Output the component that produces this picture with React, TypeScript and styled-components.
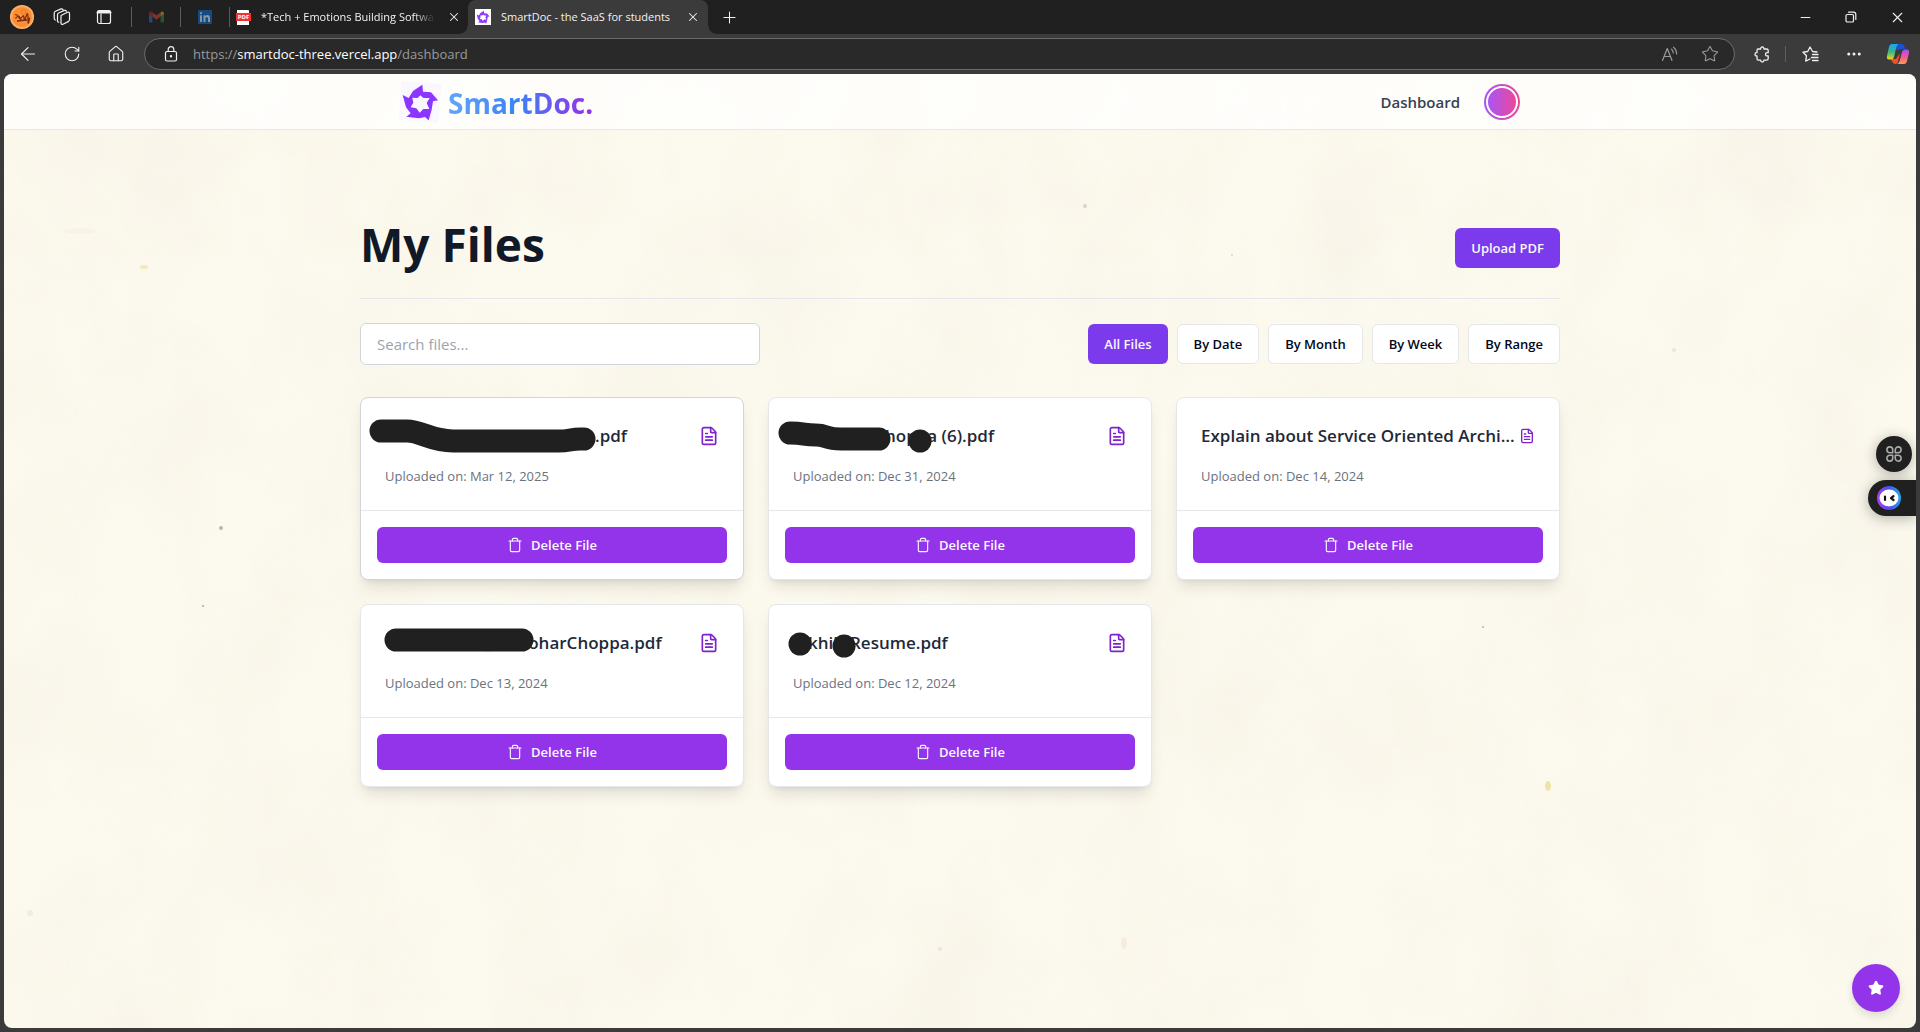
import React from 'react';
import styled, { createGlobalStyle, css } from 'styled-components';
import {
  ArrowLeft, RotateCw, House, X, Plus, Minus, Star, FileText, Trash, Ellipsis,
} from 'lucide-react';

const sans = '"Open Sans", "Noto Sans", sans-serif';

const GlobalStyle = createGlobalStyle`
  *, *::before, *::after { box-sizing: border-box; }
  body { margin: 0; background: #3b3b3b; font-family: ${sans}; }
  button, input { font-family: inherit; }
  h1, h2, p { margin: 0; }
`;

const Window = styled.div`
  min-height: 100vh;
  display: flex;
  flex-direction: column;
  background: #3b3b3b;
`;

/* ---------- browser chrome ---------- */

const TabStrip = styled.div`
  height: 34px;
  display: flex;
  align-items: center;
  background: #202020;
  color: #f2f2f2;
`;

const IconButton = styled.button<{ $w?: number; $dim?: boolean }>`
  width: ${(p) => p.$w ?? 44}px;
  height: 28px;
  flex: none;
  padding: 0;
  border: 0;
  background: none;
  color: ${(p) => (p.$dim ? '#9a9a9a' : '#f0f0f0')};
  display: flex;
  align-items: center;
  justify-content: center;
`;

const Profile = styled(IconButton)`
  margin: 0 7px 0 10px;
`;

const PinnedTab = styled.button`
  width: 49px;
  height: 20px;
  padding: 0;
  border: 0;
  border-left: 1px solid #5c5c5c;
  background: none;
  display: flex;
  align-items: center;
  justify-content: center;
`;

const Pinned = styled.div`
  display: flex;
  margin-left: 6px;
`;

const Tab = styled.div<{ $active?: boolean }>`
  position: relative;
  display: flex;
  align-items: center;
  gap: 8px;
  font-size: 11px;
  line-height: 16px;
  white-space: nowrap;
  ${(p) =>
    p.$active
      ? css`
          width: 240px;
          height: 34px;
          padding: 0 4px 0 7px;
          background: #3b3b3b;
          border-radius: 8px 8px 0 0;
          &::before, &::after {
            content: '';
            position: absolute;
            bottom: 0;
            width: 8px;
            height: 8px;
          }
          &::before {
            left: -8px;
            background: radial-gradient(circle at 0 0, #202020 7px, #3b3b3b 8px);
          }
          &::after {
            right: -8px;
            background: radial-gradient(circle at 100% 0, #202020 7px, #3b3b3b 8px);
          }
        `
      : css`
          width: 239px;
          height: 20px;
          padding: 0 3px 0 6px;
          border-left: 1px solid #5c5c5c;
        `}
`;

const TabTitle = styled.span<{ $fade?: boolean }>`
  flex: 1;
  min-width: 0;
  padding-left: 2px;
  ${(p) => p.$fade && 'mask-image: linear-gradient(to right, #000 88%, transparent);'}
`;

const WindowControls = styled.div`
  margin-left: auto;
  display: flex;
`;

const Toolbar = styled.div`
  height: 40px;
  padding-left: 6px;
  display: flex;
  align-items: center;
`;

const AddressBar = styled.div`
  flex: 1;
  height: 32px;
  margin: 0 5px 0 6px;
  padding: 0 4px;
  display: flex;
  align-items: center;
  background: #292929;
  border: 1px solid #6c6c6c;
  border-radius: 16px;
`;

const Address = styled.span`
  flex: 1;
  font-size: 13px;
  line-height: 20px;
  color: #9a9a9a;
  b { font-weight: 400; color: #fff; }
`;

const Divider = styled.span`
  width: 1px;
  height: 16px;
  margin: 0 2px 0 1px;
  background: #5e5e5e;
`;

/* ---------- site ---------- */

const Site = styled.div`
  flex: 1;
  position: relative;
  margin: 0 4px 4px;
  border-radius: 8px;
  overflow: hidden;
  background: #fcf9ee;
`;

const Paper = styled.svg`
  position: absolute;
  inset: 0;
  width: 100%;
  height: 100%;
  pointer-events: none;
`;

const Nav = styled.nav`
  position: relative;
  height: 56px;
  background: rgba(255, 255, 255, .75);
  border-bottom: 1px solid #e5e7eb;
`;

const NavInner = styled.div`
  height: 100%;
  max-width: 1200px;
  margin: 0 auto;
  padding: 0 40px 0 38px;
  display: flex;
  align-items: center;
  justify-content: space-between;
`;

const Brand = styled.a`
  display: flex;
  align-items: center;
  gap: 6px;
  text-decoration: none;
`;

const BrandName = styled.span`
  padding-top: 2px;
  font-size: 28px;
  line-height: 36px;
  font-weight: 700;
  color: transparent;
  background: linear-gradient(to right, #60a5fa, #3b82f6 48%, #9333ea 95%);
  background-clip: text;
`;

const NavLinks = styled.div`
  display: flex;
  align-items: center;
  gap: 24px;
`;

const NavLink = styled.a`
  font-size: 15px;
  line-height: 24px;
  font-weight: 600;
  color: #374151;
  text-decoration: none;
`;

const Avatar = styled.button`
  width: 36px;
  height: 36px;
  padding: 2px;
  border: 0;
  border-radius: 50%;
  background: linear-gradient(to right, #a855f7, #ec4899);

  &::before {
    content: '';
    display: block;
    width: 32px;
    height: 32px;
    border: 2px solid #fff;
    border-radius: 50%;
    background: linear-gradient(to right, #a855f7, #ec4899) padding-box;
  }
`;

const Main = styled.main`
  position: relative;
  max-width: 1200px;
  margin: 0 auto;
  padding-top: 90px;
`;

const PageHeader = styled.header`
  display: flex;
  align-items: flex-end;
  justify-content: space-between;
  padding-bottom: 30px;
  border-bottom: 1px solid #e5e7eb;
`;

const Heading = styled.h1`
  font-size: 46px;
  line-height: 48px;
  font-weight: 700;
  color: #111827;
`;

const Button = styled.button<{ $variant: 'primary' | 'outline' | 'danger' }>`
  height: ${(p) => (p.$variant === 'danger' ? 36 : 40)}px;
  width: ${(p) => (p.$variant === 'danger' ? '100%' : 'auto')};
  padding: 0 16px;
  display: flex;
  align-items: center;
  justify-content: center;
  gap: 8px;
  font-size: 13px;
  line-height: 20px;
  font-weight: 600;
  white-space: nowrap;
  border-radius: 6px;
  border: ${(p) => (p.$variant === 'outline' ? '1px solid #e5e7eb' : '0')};
  color: ${(p) => (p.$variant === 'outline' ? '#020817' : '#f8fafc')};
  background: ${(p) => ({ primary: '#7c3aed', outline: '#fff', danger: '#9333ea' })[p.$variant]};
`;

const Controls = styled.div`
  margin: 24px 0 32px;
  display: flex;
  align-items: center;
  justify-content: space-between;
`;

const Search = styled.input`
  width: 400px;
  height: 42px;
  padding: 0 16px;
  font-size: 15px;
  color: #111827;
  background: #fff;
  border: 1px solid #d1d5db;
  border-radius: 6px;
  &::placeholder { color: #9ca3af; opacity: 1; }
`;

const Filters = styled.div`
  display: flex;
  gap: 9px;
`;

const Grid = styled.ul`
  margin: 0;
  padding: 0;
  list-style: none;
  display: grid;
  grid-template-columns: repeat(3, 1fr);
  gap: 24px;
`;

const Card = styled.li<{ $hover?: boolean }>`
  position: relative;
  background: #fff;
  border: 1px solid ${(p) => (p.$hover ? '#d1d5db' : '#e5e7eb')};
  border-radius: 8px;
  box-shadow: 0 10px 15px -3px rgba(0, 0, 0, .1), 0 4px 6px -4px rgba(0, 0, 0, .1);
`;

const CardBody = styled.div`
  padding: 24px;
`;

const TitleRow = styled.div`
  display: flex;
  align-items: center;
  justify-content: space-between;
  color: #7e22ce;
`;

const FileName = styled.h2`
  font-size: 17px;
  line-height: 28px;
  font-weight: 600;
  white-space: pre;
  color: #1f2937;
`;

const Blank = styled.span<{ $w: number }>`
  display: inline-block;
  width: ${(p) => p.$w}px;
`;

const Marker = styled.svg`
  position: absolute;
  left: 0;
  top: 0;
  width: 100%;
  height: 100%;
  pointer-events: none;
  fill: none;
  stroke: #202020;
  stroke-width: 23px;
  stroke-linecap: round;
  stroke-linejoin: round;
`;

const Uploaded = styled.p`
  margin-top: 16px;
  font-size: 13px;
  line-height: 20px;
  color: #6b7280;
`;

const CardFooter = styled.div`
  padding: 16px;
  border-top: 1px solid #e5e7eb;
`;

const SideDock = styled.div`
  position: absolute;
  right: 0;
  top: 362px;
  display: flex;
  flex-direction: column;
  align-items: flex-end;
  gap: 8px;
`;

const DockButton = styled.button<{ $pill?: boolean }>`
  width: ${(p) => (p.$pill ? 48 : 36)}px;
  height: 36px;
  margin-right: ${(p) => (p.$pill ? 0 : 4)}px;
  padding: ${(p) => (p.$pill ? '0 0 0 9px' : '0')};
  display: flex;
  align-items: center;
  justify-content: ${(p) => (p.$pill ? 'flex-start' : 'center')};
  border: 0;
  border-radius: ${(p) => (p.$pill ? '18px 0 0 18px' : '18px')};
  background: #202020;
  box-shadow: 0 2px 14px rgba(0, 0, 0, .3);
`;

const Fab = styled.button`
  position: absolute;
  right: 16px;
  bottom: 16px;
  width: 48px;
  height: 48px;
  padding: 0;
  display: flex;
  align-items: center;
  justify-content: center;
  border: 0;
  border-radius: 50%;
  color: #fff;
  background: #9333ea;
  box-shadow: 0 4px 8px rgba(0, 0, 0, .12);
`;

/* ---------- drawings ---------- */

const LogoShape = () => (
  <path
    fill="#8b35ff"
    fillRule="evenodd"
    d="M217 44 219 65 243 67 264 91 249 94 245 119 236 151 225 141 207 145 169 140 182 130 168 112 158 75 176 84 189 63ZM211 76 203 84 187 83 190 98 182 112 199 115 209 128 220 117 238 117 230 99 239 84 220 84Z"
  />
);

const Logo = () => (
  <svg width="44" height="44" viewBox="144 30 132 132" aria-hidden="true">
    <path fill="#faf7ff" d="M154 33 275 42 265 159 147 150Z" />
    <LogoShape />
  </svg>
);

const stroke = {
  fill: 'none', stroke: 'currentColor', strokeWidth: 1.2,
  strokeLinecap: 'round' as const, strokeLinejoin: 'round' as const,
};

const WorkspacesIcon = () => (
  <svg width="18" height="18" viewBox="0 0 18 18" {...stroke}>
    <path d="M8 7.5 14.5 4.2Q16.5 3.6 16.5 5.5V11.5Q16.5 13 15.2 13.6L10 16.2Q8 16.8 8 15ZM8 7.5V15" />
    <path d="M5.8 14.2Q4.5 14.4 4.5 12.8V6.8Q4.5 5.4 6 4.8L11.5 2.4Q13 2 13.4 3.2M2.6 12Q1.2 12 1.2 10.5V5Q1.2 3.8 2.5 3.2L8 .9Q9.4.6 10 1.6" />
  </svg>
);

const TabActionsIcon = () => (
  <svg width="16" height="16" viewBox="0 0 16 16" {...stroke}>
    <rect x="1.5" y="1.5" width="13" height="13" rx="2" />
    <path d="M1.5 3.5h13M2 2.5h12" strokeWidth="2" />
    <path d="M5 5v9" />
  </svg>
);

const LockIcon = () => (
  <svg width="16" height="16" viewBox="0 0 16 16" {...stroke}>
    <rect x="2.5" y="5.5" width="11" height="9.5" rx="1.5" />
    <path d="M5.2 5.5V3.500A2.800 2.800 0 0 1 10.800 3.500V5.500" />
    <circle cx="8" cy="10.2" r=".6" fill="currentColor" />
  </svg>
);

const GmailIcon = () => (
  <svg width="15" height="12" viewBox="0 0 15 12">
    <path fill="#24487a" d="M0 2h3.4v9.5H1Q0 11.5 0 10.5Z" />
    <path fill="#235636" d="M11.6 2H15v8.500q0 1-1 1h-2.400Z" />
    <path fill="#86302a" d="M3.4 1.2 7.5 4.4l4.1-3.2v4.3L7.5 8.7 3.4 5.5Z" />
    <path fill="#6c2620" d="M0 2.6Q0 .5 1.8.5q.8 0 1.6.7v4.3L0 3Z" />
    <path fill="#80681f" d="M15 2.6Q15 .5 13.2.5q-.8 0-1.6.7v4.3L15 3Z" />
  </svg>
);

const LinkedInIcon = () => (
  <svg width="14" height="14" viewBox="0 0 14 14">
    <rect width="14" height="14" rx="1" fill="#174a7c" />
    <path fill="#8296ab" d="M2 5.3h2V12H2ZM3 2.1a1.1 1.1 0 1 1 0 2.2 1.1 1.1 0 0 1 0-2.2M5.5 5.3h2v.9Q8.200 5.100 9.600 5.100 12 5.100 12 8v4h-2V8.500Q10 6.900 8.900 6.900 7.500 6.900 7.500 8.600V12h-2Z" />
  </svg>
);

const PdfMark = styled.span`
  width: 15px;
  height: 15px;
  flex: none;
  display: flex;
  align-items: center;
  justify-content: center;
  background: linear-gradient(#fff, #fff) 1px 0 / 12px 15px no-repeat;
  border-radius: 1px 4px 1px 1px;
  span {
    width: 15px;
    flex: none;
    background: #f0342c;
    color: #fff;
    font-size: 6px;
    line-height: 8px;
    font-weight: 700;
    text-align: center;
  }
`;

const ProfilePicture = () => (
  <svg width="24" height="24" viewBox="0 0 24 24">
    <defs>
      <radialGradient id="sun"><stop offset="0" stopColor="#ff9a3c" /><stop offset=".75" stopColor="#fb8a34" /><stop offset="1" stopColor="#ffc27a" /></radialGradient>
    </defs>
    <circle cx="12" cy="12" r="12" fill="url(#sun)" />
    <circle cx="13.5" cy="7" r="2.2" fill="none" stroke="#d8761c" strokeWidth=".8" />
    <path d="M5 9.500 8.500 10.500M5.500 13.500Q8 10 9 12.500T12 12 14 13.500 16 11.500 18 14 19.500 12.500M7 16 17 15M9 11 11 15" fill="none" stroke="#7c2c0c" strokeWidth="1.3" />
  </svg>
);

const RestoreIcon = () => (
  <svg width="12" height="12" viewBox="0 0 12 12" {...stroke}>
    <rect x="1" y="3.5" width="7.5" height="7.5" rx="1.3" />
    <path d="M3.500 1.200H8.500Q10.800 1.200 10.800 3.500V8.500" />
  </svg>
);

const ReadAloudIcon = () => (
  <svg width="18" height="16" viewBox="0 0 18 16" {...stroke}>
    <path d="M1.500 14.500 6.300 2.500 11 14.500M3.200 10.500H9.400M10.500 3.200Q12.200 4.400 12.200 7M12.500 1.200Q15.600 3.600 15.600 8" />
  </svg>
);

const ExtensionIcon = () => (
  <svg width="17" height="17" viewBox="0 0 17 17" {...stroke} strokeWidth="1.3">
    <path d="M3 4.200Q3 3 4.200 3H6.700V2.600Q6.700 1 8.300 1T9.900 2.600V3H12.500Q14.200 3 14.200 4.500V6.700H13.200Q11.500 6.700 11.500 8.300T13.200 9.900H14.200V12.500Q14.200 14.200 12.500 14.200H9.900V14.500Q9.900 16 8.300 16T6.700 14.500V14.200H4.200Q3 14.200 3 12.500V9.900H2.600Q1 9.900 1 8.300T2.600 6.700H3Z" />
  </svg>
);

const FavoritesIcon = () => (
  <svg width="17" height="17" viewBox="0 0 17 17" {...stroke} strokeWidth="1.3">
    <path d="M15 6 10.600 5.500 8 1 5.700 5.500 1 6.200 4.500 9.700 3.700 15.200 8 13M10.500 8.500H16M9.500 11.500H16M10.500 14.500H16" />
  </svg>
);

const CopilotIcon = () => (
  <svg width="24" height="22" viewBox="0 0 24 22">
    <defs>
      <linearGradient id="cpA" x1="0" y1="0" x2="0" y2="1"><stop offset="0" stopColor="#18a6f0" /><stop offset=".5" stopColor="#35b88a" /><stop offset="1" stopColor="#f3d514" /></linearGradient>
      <linearGradient id="cpB" x1="0" y1="0" x2="0" y2="1"><stop offset="0" stopColor="#a64df0" /><stop offset=".5" stopColor="#f0569a" /><stop offset="1" stopColor="#ff9d4a" /></linearGradient>
    </defs>
    <path fill="#1c4fd6" d="M8 1h7.500q2 0 2.700 2l1 3h-5q-2 0-2.700 2Z" />
    <path fill="#f0502c" d="M5 16h5l4-6-2 9q-.7 2-2.600 2Q6.500 21 5 16Z" />
    <path fill="url(#cpA)" d="M6 1h7q-2 .5-2.600 3L8 14q-.6 2.500-3 2.500H3Q.3 16.500 1 13L3 4Q3.700 1 6 1Z" />
    <path fill="url(#cpB)" d="M18 21h-7q2-.5 2.600-3L16 9q.6-2.500 3-2.500h2q2.700 0 2 3.500l-2 8q-.7 3-3 3Z" />
  </svg>
);

const PetalsIcon = () => (
  <svg width="16" height="16" viewBox="0 0 16 16" fill="none" stroke="#a9a9a9" strokeWidth="1.6" strokeLinejoin="round">
    <path d="M6.700 6.700H3.800A2.900 2.900 0 1 1 6.700 3.800ZM9.300 6.700V3.800A2.900 2.900 0 1 1 12.200 6.700ZM6.700 9.300V12.200A2.900 2.900 0 1 1 3.800 9.300ZM9.300 9.300H12.200A2.900 2.900 0 1 1 9.300 12.200Z" />
  </svg>
);

const BotIcon = () => (
  <svg width="24" height="24" viewBox="0 0 24 24">
    <defs>
      <linearGradient id="bot" x1="0" y1=".6" x2="1" y2=".5"><stop offset="0" stopColor="#b43cf0" /><stop offset=".5" stopColor="#4a4cf5" /><stop offset="1" stopColor="#20a8e8" /></linearGradient>
    </defs>
    <circle cx="12" cy="12" r="12" fill="url(#bot)" />
    <ellipse cx="12" cy="12" rx="9.5" ry="8.5" fill="#fff" />
    <path d="M8 10.500v3.500M16.500 10.200 14 12.200 16.500 14" fill="none" stroke="#111" strokeWidth="2.2" strokeLinecap="round" strokeLinejoin="round" />
  </svg>
);

const PaperTexture = () => (
  <Paper aria-hidden="true">
    <defs>
      <filter id="blotches" x="0" y="0" width="100%" height="100%" colorInterpolationFilters="sRGB">
        <feTurbulence type="fractalNoise" baseFrequency=".01 .007" numOctaves="4" seed="8" />
        <feColorMatrix values="0 0 0 0 .9  0 0 0 0 .87  0 0 0 0 .81  .9 0 0 0 -.3" />
      </filter>
    </defs>
    <rect width="100%" height="100%" filter="url(#blotches)" opacity=".3" />
    <g fill="#ecd98a">
      <ellipse cx="140" cy="193" rx="4" ry="2" opacity=".5" />
      <ellipse cx="1544" cy="712" rx="3" ry="5" opacity=".7" />
    </g>
    <g fill="#8d877c">
      <circle cx="1081" cy="132" r="2" opacity=".3" />
      <circle cx="217" cy="454" r="2" opacity=".6" />
      <circle cx="199" cy="532" r="1" opacity=".7" />
      <circle cx="1479" cy="553" r="1" opacity=".6" />
      <circle cx="1228" cy="181" r="1" opacity=".3" />
      <circle cx="1670" cy="276" r="2" opacity=".15" />
      <circle cx="26" cy="839" r="3" opacity=".1" />
      <circle cx="936" cy="875" r="2" opacity=".15" />
    </g>
    <g fill="#f3e2cf">
      <ellipse cx="1120" cy="869" rx="3" ry="6" opacity=".5" />
      <ellipse cx="76" cy="157" rx="16" ry="3" opacity=".2" />
    </g>
  </Paper>
);

/* ---------- data ---------- */

type FileEntry = {
  date: string;
  name: React.ReactNode;
  marks?: string[];
  small?: boolean;
};

const files: FileEntry[] = [
  {
    date: 'Mar 12, 2025',
    name: <><Blank $w={210} />.pdf</>,
    marks: ['M20 33H46C60 33 70 43 92 43H198C208 43 210 41 219 41H223'],
  },
  {
    date: 'Dec 31, 2024',
    name: <><Blank $w={92} />hoppa (6).pdf</>,
    marks: ['M21 35C36 35 34 37 47 37C58 37 56 41 72 41H110', 'M151 43h.1'],
  },
  { date: 'Dec 14, 2024', name: 'Explain about Service Oriented Archi…', small: true },
  {
    date: 'Dec 13, 2024',
    name: <><Blank $w={99} />_<Blank $w={37} />oharChoppa.pdf</>,
    marks: ['M35 35H161'],
  },
  {
    date: 'Dec 12, 2024',
    name: <><Blank $w={15} />khil<Blank $w={12} />Resume.pdf</>,
    marks: ['M31 39h.1', 'M75 41h.1'],
  },
];

const filters = ['All Files', 'By Date', 'By Month', 'By Week', 'By Range'];

export default function App() {
  return (
    <>
      <GlobalStyle />
      <Window>
        <TabStrip>
          <Profile $w={24} aria-label="Profile"><ProfilePicture /></Profile>
          <IconButton $w={42} aria-label="Workspaces"><WorkspacesIcon /></IconButton>
          <IconButton $w={42} aria-label="Tab actions"><TabActionsIcon /></IconButton>
          <Pinned>
            <PinnedTab aria-label="Mail"><GmailIcon /></PinnedTab>
            <PinnedTab aria-label="LinkedIn"><LinkedInIcon /></PinnedTab>
          </Pinned>
          <Tab>
            <PdfMark><span>PDF</span></PdfMark>
            <TabTitle $fade>*Tech + Emotions Building Softwa</TabTitle>
            <IconButton $w={22} aria-label="Close tab"><X size={14} strokeWidth={1.8} /></IconButton>
          </Tab>
          <Tab $active>
            <svg width="16" height="16" viewBox="144 30 132 132" aria-hidden="true">
              <rect x="144" y="30" width="132" height="132" fill="#fff" />
              <LogoShape />
            </svg>
            <TabTitle>SmartDoc - the SaaS for students</TabTitle>
            <IconButton $w={22} aria-label="Close tab"><X size={14} strokeWidth={1.8} /></IconButton>
          </Tab>
          <IconButton $w={42} aria-label="New tab"><Plus size={19} strokeWidth={1.3} /></IconButton>
          <WindowControls>
            <IconButton $w={46} aria-label="Minimize"><Minus size={15} strokeWidth={1.6} /></IconButton>
            <IconButton $w={46} aria-label="Restore"><RestoreIcon /></IconButton>
            <IconButton $w={46} aria-label="Close"><X size={17} strokeWidth={1.6} /></IconButton>
          </WindowControls>
        </TabStrip>

        <Toolbar>
          <IconButton aria-label="Back"><ArrowLeft size={22} strokeWidth={1.3} /></IconButton>
          <IconButton aria-label="Refresh"><RotateCw size={18} strokeWidth={1.5} /></IconButton>
          <IconButton aria-label="Home"><House size={18} strokeWidth={1.5} /></IconButton>
          <AddressBar>
            <IconButton aria-label="Site information"><LockIcon /></IconButton>
            <Address>https://<b>smartdoc-three.vercel.app</b>/dashboard</Address>
            <IconButton $w={40} $dim aria-label="Read aloud"><ReadAloudIcon /></IconButton>
            <IconButton $w={40} $dim aria-label="Add to favorites"><Star size={18} strokeWidth={1.4} /></IconButton>
          </AddressBar>
          <IconButton aria-label="Extensions"><ExtensionIcon /></IconButton>
          <Divider />
          <IconButton aria-label="Favorites"><FavoritesIcon /></IconButton>
          <IconButton aria-label="More"><Ellipsis size={18} strokeWidth={2} /></IconButton>
          <IconButton aria-label="Copilot"><CopilotIcon /></IconButton>
        </Toolbar>

        <Site>
          <PaperTexture />

          <Nav>
            <NavInner>
              <Brand href="#home"><Logo /><BrandName>SmartDoc.</BrandName></Brand>
              <NavLinks>
                <NavLink href="#dashboard">Dashboard</NavLink>
                <Avatar aria-label="Account" />
              </NavLinks>
            </NavInner>
          </Nav>

          <Main>
            <PageHeader>
              <Heading>My Files</Heading>
              <Button $variant="primary">Upload PDF</Button>
            </PageHeader>

            <Controls>
              <Search type="text" aria-label="Search files" placeholder="Search files..." />
              <Filters>
                {filters.map((f, i) => (
                  <Button key={f} $variant={i === 0 ? 'primary' : 'outline'}>{f}</Button>
                ))}
              </Filters>
            </Controls>

            <Grid>
              {files.map((file, i) => (
                <Card key={file.date} $hover={i === 0}>
                  <CardBody>
                    <TitleRow>
                      <FileName>{file.name}</FileName>
                      <FileText size={file.small ? 16 : 20} />
                    </TitleRow>
                    <Uploaded>Uploaded on: {file.date}</Uploaded>
                  </CardBody>
                  <CardFooter>
                    <Button $variant="danger"><Trash size={16} strokeWidth={1.7} />Delete File</Button>
                  </CardFooter>
                  {file.marks && (
                    <Marker aria-hidden="true">
                      {file.marks.map((d) => <path key={d} d={d} />)}
                    </Marker>
                  )}
                </Card>
              ))}
            </Grid>
          </Main>

          <SideDock>
            <DockButton aria-label="Apps"><PetalsIcon /></DockButton>
            <DockButton $pill aria-label="Assistant"><BotIcon /></DockButton>
          </SideDock>
          <Fab aria-label="Favourite"><Star size={16} fill="currentColor" /></Fab>
        </Site>
      </Window>
    </>
  );
}
